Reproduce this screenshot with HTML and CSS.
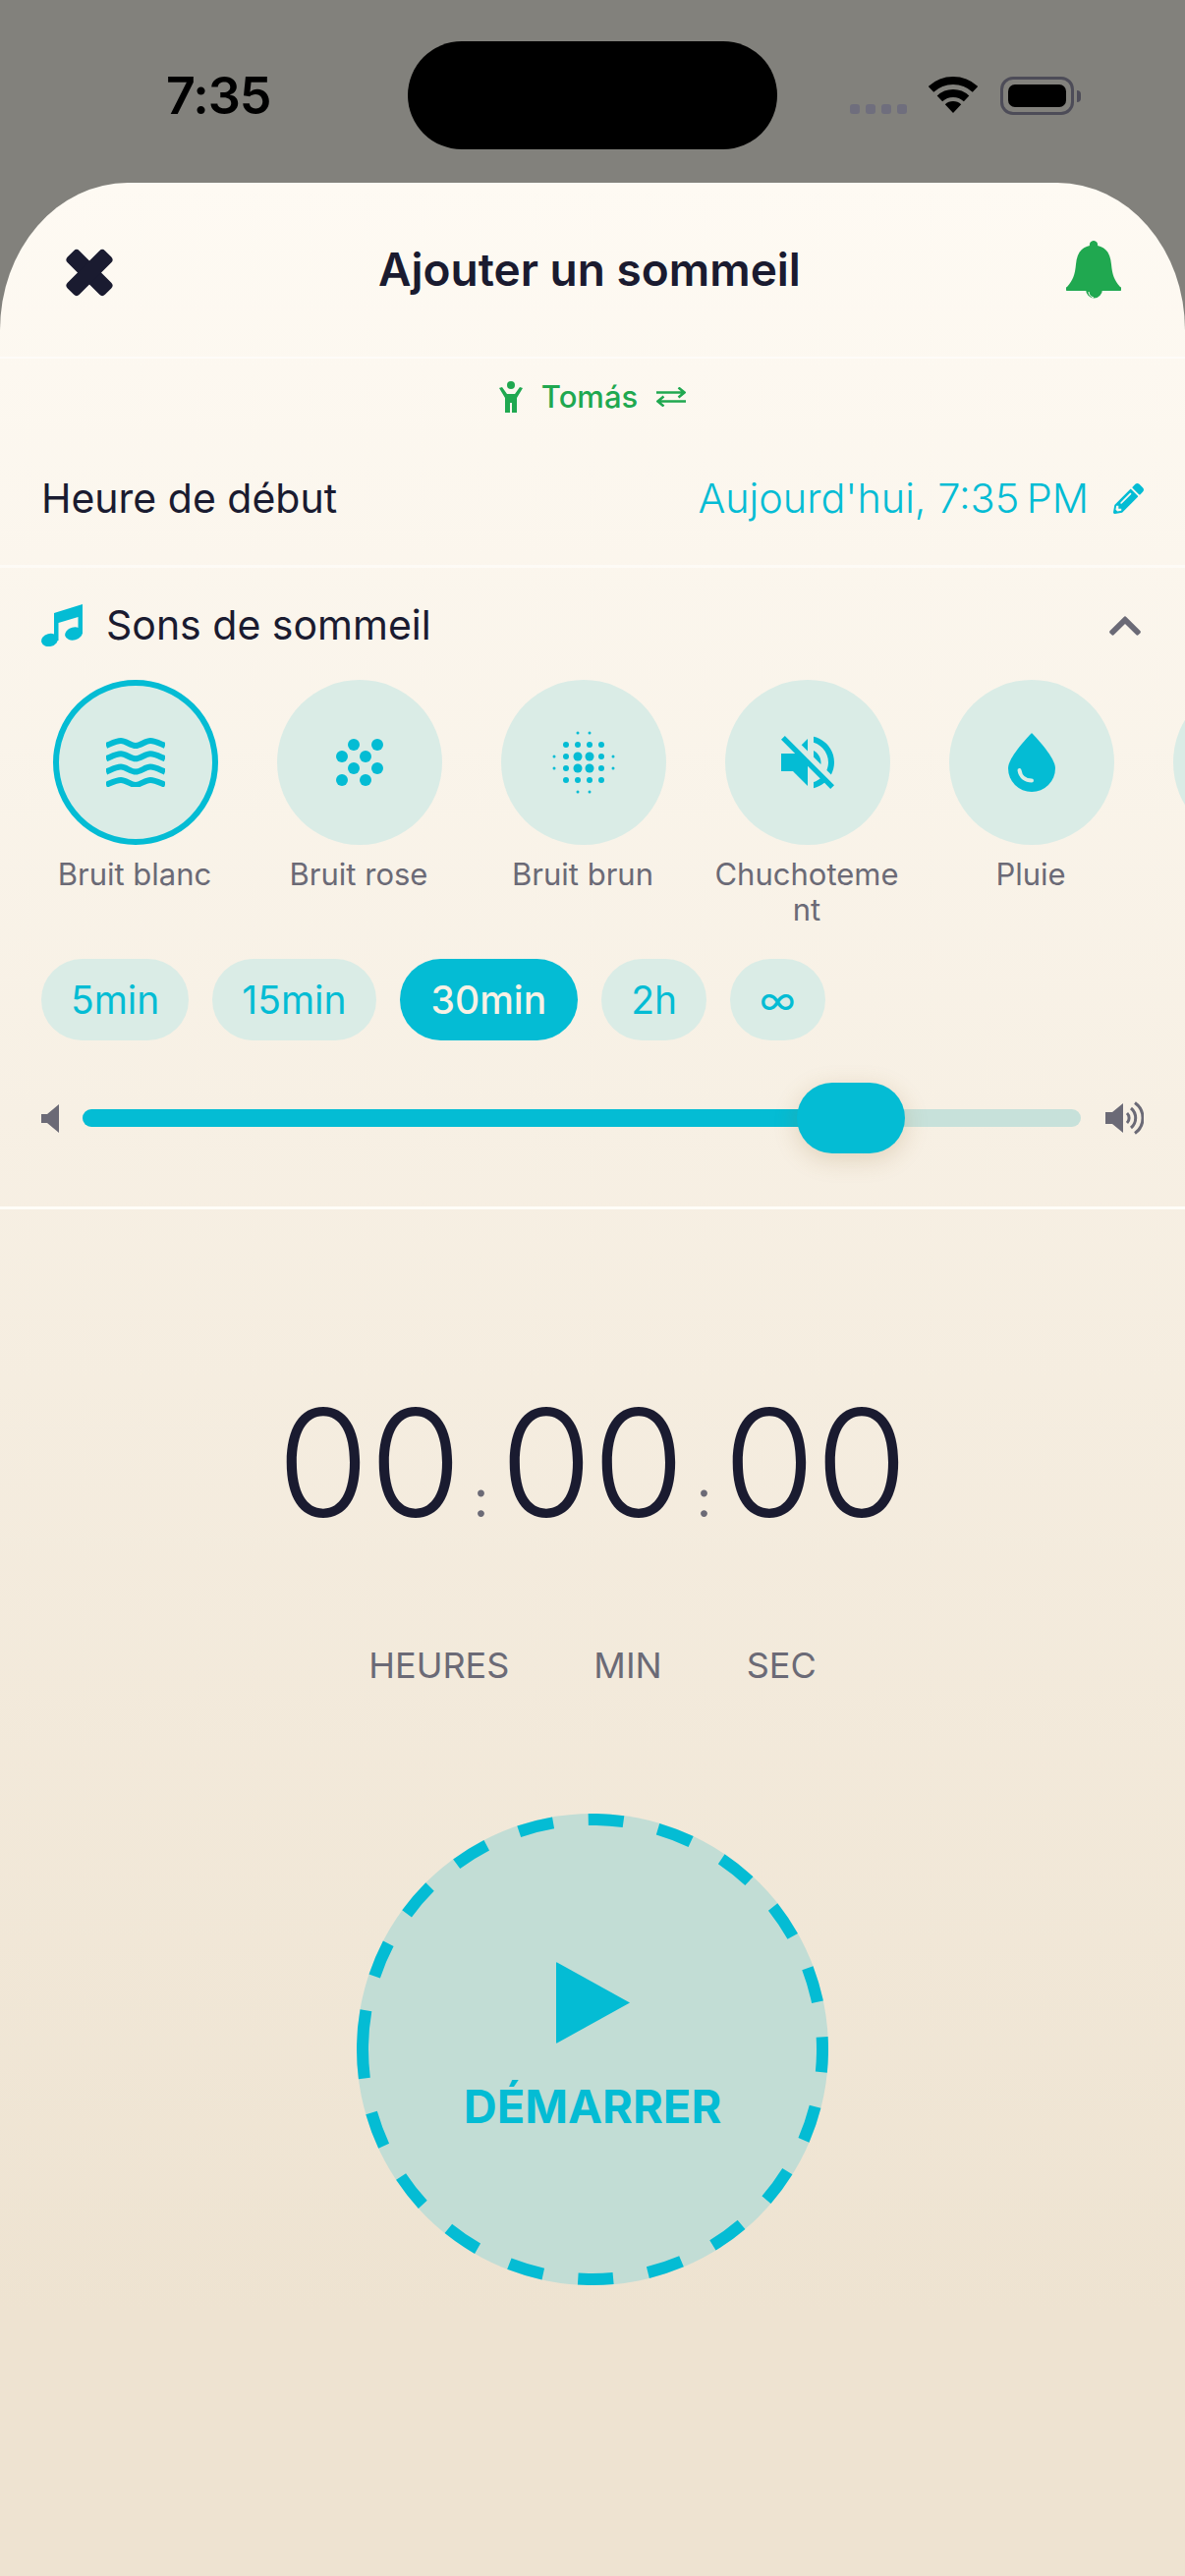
FILE: index.html
```html
<!DOCTYPE html>
<html lang="fr">
<head>
<meta charset="utf-8">
<title>Ajouter un sommeil</title>
<link rel="stylesheet" href="styles.css">
</head>
<body>
<div class="phone">
  <header class="status">
    <span class="clock">7:35</span>
    <div class="island"></div>
    <div class="status-icons">
      <div class="signal"><i></i><i></i><i></i><i></i></div>
      <svg class="wifi" viewBox="0 0 50 38"><g fill="none" stroke="#000" stroke-width="8"><path d="M2.500 12.900A33 33 0 0 1 47.500 12.900"/><path d="M11.400 22.400A20 20 0 0 1 38.600 22.400"/></g><path d="M16.800 28.200A12 12 0 0 1 33.200 28.200L25 37Z"/></svg>
      <div class="battery"><div class="battery-fill"></div></div>
      <div class="battery-tip"></div>
    </div>
  </header>
  <main class="sheet">
    <div class="top-bar">
      <svg class="close" viewBox="0 0 48 49"><g fill="#1a1b30"><rect x="-3" y="16" width="54" height="17" rx="4" transform="rotate(45 24 24.500)"/><rect x="-3" y="16" width="54" height="17" rx="4" transform="rotate(-45 24 24.500)"/></g></svg>
      <h1 class="title">Ajouter un sommeil</h1>
      <svg class="bell" viewBox="0 0 56 59"><path fill="#20a850" d="M28 0a4 4 0 0 1 4 5c9 2 13 8 14 19 1 11 3 16 9 23a2 2 0 0 1-1 4H2a2 2 0 0 1-1-4c6-7 8-12 9-23C11 13 15 7 24 5a4 4 0 0 1 4-5Z"/><path fill="#20a850" d="M20 49a8.500 9.500 0 0 0 17 0Z"/><path fill="none" stroke="#fdf9f2" stroke-width="1" d="M23 52c0 3 2 5 5 6"/></svg>
    </div>
    <div class="child">
      <svg class="figure" viewBox="0 0 24 32"><circle cx="12" cy="4" r="4"/><path d="M0 7l3-1 5 7h8l5-7 3 1-6 10v15h-5V22h-2v10H6V17Z"/></svg>
      <span class="child-name">Tomás</span>
      <svg class="swap" viewBox="0 0 30 20"><g fill="none" stroke="#20a850" stroke-width="2.500"><path d="M0 5.500H28M22.500 0.500L28.500 5.500L22.500 10.500"/><path d="M30 14.500H2M7.500 9.500L1.500 14.500L7.500 19.500"/></g></svg>
    </div>
    <div class="time-row">
      <span class="time-label">Heure de début</span>
      <div class="time-value">
        <span class="time-text">Aujourd'hui, 7:35&#8201;PM</span>
        <svg class="pencil" viewBox="0 0 512 512"><path d="M497.900 142.100l-46.100 46.100c-4.700 4.700-12.300 4.700-17 0l-111-111c-4.700-4.700-4.700-12.300 0-17l46.100-46.100c18.700-18.700 49.100-18.700 67.900 0l60.100 60.100c18.800 18.700 18.800 49.100 0 67.900zM284.200 99.800L21.600 362.400.4 483.900c-2.900 16.400 11.400 30.600 27.800 27.800l121.500-21.300 262.600-262.600c4.700-4.700 4.700-12.300 0-17l-111-111c-4.800-4.700-12.400-4.700-17.100 0zM124.100 339.900c-5.500-5.500-5.500-14.300 0-19.800l154-154c5.500-5.500 14.300-5.500 19.800 0s5.500 14.300 0 19.800l-154 154c-5.500 5.500-14.300 5.500-19.800 0zM88 424h48v36.300l-64.500 11.300-31.100-31.100L51.700 376H88v48z"/></svg>
      </div>
    </div>
    <section class="sounds">
      <div class="sounds-head">
        <svg class="music" viewBox="0 0 42 43"><ellipse cx="8.500" cy="36.500" rx="8.500" ry="6.500" transform="rotate(-15 8.500 36.500)"/><ellipse cx="33" cy="30" rx="9" ry="6.500" transform="rotate(-15 33 30)"/><path d="M13 9L42 0V30H37.500V13L17.500 19V37H13Z"/></svg>
        <span class="sounds-title">Sons de sommeil</span>
        <svg class="chevron" viewBox="-10 110 468 292"><path d="M240.971 130.524l194.343 194.343c9.373 9.373 9.373 24.569 0 33.941l-22.667 22.667c-9.357 9.357-24.522 9.375-33.901.04L224 227.495 69.255 381.516c-9.379 9.335-24.544 9.317-33.901-.04l-22.667-22.667c-9.373-9.373-9.373-24.569 0-33.941L207.030 130.525c9.372-9.373 24.568-9.373 33.941-.001z"/></svg>
      </div>
      <div class="sound-list">
        <div class="sound">
          <div class="disc disc-on">
            <svg class="ic-waves" viewBox="0 0 60 50"><g fill="none" stroke="#04bcd4" stroke-width="6"><path d="M0 8C5 6 10 3 15 3S25 8 30 8 40 3 45 3 55 6 60 8"/><path d="M0 21.300C5 19.300 10 16.300 15 16.300S25 21.300 30 21.300 40 16.300 45 16.300 55 19.300 60 21.300"/><path d="M0 34.600C5 32.600 10 29.600 15 29.600S25 34.600 30 34.600 40 29.600 45 29.600 55 32.600 60 34.600"/><path d="M0 47.900C5 45.900 10 42.900 15 42.900S25 47.900 30 47.900 40 42.900 45 42.900 55 45.900 60 47.900"/></g></svg>
          </div>
          <span class="sound-name">Bruit blanc</span>
        </div>
        <div class="sound">
          <div class="disc">
            <svg class="ic-grid" viewBox="-36 -36 72 72"><g fill="#04bcd4"><circle cx="-6" cy="-18" r="6"/><circle cx="18" cy="-18" r="6"/><circle cx="-18" cy="-6" r="6"/><circle cx="6" cy="-6" r="6"/><circle cx="-6" cy="6" r="6"/><circle cx="18" cy="6" r="6"/><circle cx="-18" cy="18" r="6"/><circle cx="6" cy="18" r="6"/></g></svg>
          </div>
          <span class="sound-name">Bruit rose</span>
        </div>
        <div class="sound">
          <div class="disc">
            <svg class="ic-grid" viewBox="-36 -36 72 72"><g fill="#04bcd4"><circle cx="-6" cy="-6" r="4.500"/><circle cx="6" cy="-6" r="4.500"/><circle cx="-6" cy="6" r="4.500"/><circle cx="6" cy="6" r="4.500"/><circle cx="-18" cy="-6" r="3"/><circle cx="18" cy="-6" r="3"/><circle cx="-18" cy="6" r="3"/><circle cx="18" cy="6" r="3"/><circle cx="-6" cy="-18" r="3"/><circle cx="6" cy="-18" r="3"/><circle cx="-6" cy="18" r="3"/><circle cx="6" cy="18" r="3"/><circle cx="-18" cy="-18" r="3"/><circle cx="18" cy="-18" r="3"/><circle cx="-18" cy="18" r="3"/><circle cx="18" cy="18" r="3"/><circle cx="-30" cy="-6" r="1.500"/><circle cx="30" cy="-6" r="1.500"/><circle cx="-30" cy="6" r="1.500"/><circle cx="30" cy="6" r="1.500"/><circle cx="-6" cy="-30" r="1.500"/><circle cx="6" cy="-30" r="1.500"/><circle cx="-6" cy="30" r="1.500"/><circle cx="6" cy="30" r="1.500"/></g></svg>
          </div>
          <span class="sound-name">Bruit brun</span>
        </div>
        <div class="sound">
          <div class="disc">
            <svg class="ic-mute" viewBox="0 0 24 24"><path fill="#04bcd4" d="M16.500 12c0-1.770-1.020-3.290-2.500-4.030v2.210l2.450 2.450c.03-.2.05-.41.05-.63zm2.500 0c0 .94-.2 1.820-.54 2.640l1.510 1.510C20.630 14.910 21 13.500 21 12c0-4.280-2.990-7.860-7-8.770v2.060c2.890.86 5 3.540 5 6.710zM4.270 3L3 4.270 7.730 9H3v6h4l5 5v-6.730l4.250 4.250c-.67.52-1.420.93-2.250 1.180v2.060c1.380-.31 2.630-.95 3.690-1.810L19.730 21 21 19.730l-9-9L4.270 3zM12 4L9.910 6.090 12 8.180V4z"/></svg>
          </div>
          <span class="sound-name">Chuchotement</span>
        </div>
        <div class="sound">
          <div class="disc">
            <svg class="ic-drop" viewBox="0 0 48 60"><path fill="#04bcd4" d="M24 0C24 0 0 24 0 36A24 24 0 0 0 48 36C48 24 24 0 24 0Z"/><path fill="none" stroke="#dbece5" stroke-width="4" stroke-linecap="round" d="M11.500 38C12.500 45 18 48.500 24 48.500"/></svg>
          </div>
          <span class="sound-name">Pluie</span>
        </div>
        <div class="sound">
          <div class="disc"></div>
        </div>
      </div>
      <div class="chips">
        <span class="chip">5min</span>
        <span class="chip">15min</span>
        <span class="chip chip-on">30min</span>
        <span class="chip">2h</span>
        <span class="chip">∞</span>
      </div>
      <div class="volume">
        <svg class="vol-low" viewBox="0 0 18 29"><path d="M0 10H6L18 0V29L6 19H0Z"/></svg>
        <div class="track">
          <div class="track-fill"></div>
          <div class="thumb"></div>
        </div>
        <svg class="vol-high" viewBox="0 0 39 34"><path fill="#6b6a76" d="M0 11H7L18 2V32L7 23H0Z"/><g fill="none" stroke="#6b6a76" stroke-width="3"><path d="M22 12A7 7 0 0 1 22 22"/><path d="M26 7A13 13 0 0 1 26 27"/><path d="M30 1.500A19 19 0 0 1 30 32.500"/></g></svg>
      </div>
    </section>
    <section class="timer">
      <div class="digits">
        <span class="digit">00</span>
        <span class="colon">:</span>
        <span class="digit">00</span>
        <span class="colon">:</span>
        <span class="digit">00</span>
      </div>
      <div class="units">
        <span class="unit">HEURES</span>
        <span class="unit">MIN</span>
        <span class="unit">SEC</span>
      </div>
      <button class="start" type="button">
        <svg class="start-ring" viewBox="0 0 480 480"><circle cx="240" cy="240" r="234" fill="none" stroke="#04bcd4" stroke-width="12" stroke-dasharray="36 35.800" transform="rotate(181 240 240)"/></svg>
        <svg class="play" viewBox="0 0 75 83"><path d="M1 0.500L75 41.500L1 82.500Q0 83 0 82V1Q0 0 1 0.500Z"/></svg>
        <span class="start-label">DÉMARRER</span>
      </button>
    </section>
  </main>
</div>
</body>
</html>
```
FILE: styles.css
```css
* { box-sizing: border-box; }
html, body { margin: 0; padding: 0; }
body { width: 1206px; height: 2622px; overflow: hidden; font-family: Inter, "Liberation Sans", sans-serif; color: #1a1b30; }
svg { display: block; flex: none; }
.phone { width: 1206px; height: 2622px; background: #82817c; display: flex; flex-direction: column; }

.status { height: 186px; flex: none; display: flex; align-items: flex-start; padding-left: 169px; }
.clock { width: 246px; margin-top: 70px; font-size: 52px; line-height: 56px; font-weight: 600; color: #000; letter-spacing: -1px; }
.island { width: 376px; height: 110px; margin-top: 42px; border-radius: 55px; background: #000; }
.status-icons { display: flex; align-items: flex-start; margin-top: 78px; margin-left: 74px; }
.signal { display: flex; gap: 6px; margin-top: 28px; }
.signal i { width: 10px; height: 10px; border-radius: 3px; background: #6f6e7d; }
.wifi { width: 50px; height: 38px; margin-left: 22px; }
.battery { width: 75px; height: 39px; margin-left: 23px; padding: 5px; border: 3px solid #4d4c58; border-radius: 13px; }
.battery-fill { width: 100%; height: 100%; background: #000; border-radius: 7px; }
.battery-tip { width: 4px; height: 12px; margin: 14px 0 0 3px; background: #4d4c58; border-radius: 0 6px 6px 0; }

.sheet { flex: 1; display: flex; flex-direction: column; border-radius: 130px 130px 0 0 / 150px 150px 0 0; background: linear-gradient(180deg, #fefaf3 0%, #eee3d1 89%); overflow: hidden; }
.top-bar { height: 177px; flex: none; display: flex; align-items: center; justify-content: space-between; padding: 0 65px 0 67px; }
.close { width: 48px; height: 49px; margin-top: 6px; }
.title { margin: 0 0 2px; font-size: 46px; line-height: 56px; font-weight: 600; color: #1a1b30; }
.bell { width: 56px; height: 59px; }

.child { height: 80px; flex: none; display: flex; align-items: center; justify-content: center; border-top: 2px solid rgba(255,255,255,.5); }
.figure { width: 24px; height: 32px; fill: #20a850; }
.child-name { margin: 0 19px; font-size: 31px; line-height: 38px; font-weight: 500; color: #20a850; }
.swap { width: 30px; height: 20px; }

.time-row { height: 135px; flex: none; display: flex; align-items: center; justify-content: space-between; padding: 0 42px 4px; border-bottom: 3px solid rgba(255,255,255,.5); }
.time-label { font-size: 41px; line-height: 48px; }
.time-value { display: flex; align-items: center; gap: 25px; }
.time-text { font-size: 41.4px; line-height: 48px; font-weight: 300; color: #04bcd4; }
.pencil { width: 31px; height: 31px; fill: #04bcd4; }

.sounds { flex: none; border-bottom: 3px solid #fffdf8; padding-bottom: 54px; }
.sounds-head { display: flex; align-items: center; height: 36px; margin: 40px 44px 38px 42px; }
.music { width: 42px; height: 43px; fill: #04bcd4; }
.sounds-title { margin-left: 24px; flex: 1; font-size: 41px; line-height: 48px; }
.chevron { width: 34px; height: 22px; margin-top: 2px; fill: #6b6a76; }
.sound-list { display: flex; gap: 32px; padding-left: 39px; width: 1206px; overflow: hidden; }
.sound { width: 196px; flex: none; display: flex; flex-direction: column; align-items: center; }
.disc { width: 168px; height: 168px; flex: none; margin-left: 2px; border-radius: 50%; background: #daece6; display: flex; align-items: center; justify-content: center; }
.disc-on { border: 6px solid #04bcd4; }
.ic-waves { width: 60px; height: 50px; }
.ic-grid { width: 72px; height: 72px; }
.ic-mute { width: 72px; height: 72px; }
.ic-drop { width: 48px; height: 60px; }
.sound-name { width: 100%; margin-top: 12px; font-size: 31px; line-height: 36px; color: #6b6a76; text-align: center; overflow-wrap: anywhere; }
.chips { display: flex; gap: 24px; margin: 32px 42px 0; }
.chip { height: 83px; padding: 0 30px; display: flex; align-items: center; border-radius: 42px; background: #daece6; color: #04bcd4; font-size: 39px; line-height: 46px; }
.chip-on { padding: 0 32px; background: #04bcd4; color: #f9f1e5; font-weight: 500; }
.volume { display: flex; align-items: center; height: 72px; margin: 43px 42px 0; }
.vol-low { width: 18px; height: 29px; fill: #6b6a76; }
.track { position: relative; width: 1016px; height: 18px; margin-left: 24px; background: #c7e1da; border-radius: 9px; }
.track-fill { width: 780px; height: 18px; background: #04bcd4; border-radius: 9px; }
.thumb { position: absolute; left: 727px; top: -27px; width: 110px; height: 72px; border-radius: 36px; background: #04bcd4; box-shadow: 0 6px 24px rgba(150,110,50,.22); }
.vol-high { width: 39px; height: 34px; margin-left: 25px; }

.timer { flex: 1; display: flex; flex-direction: column; align-items: center; }
.digits { display: flex; align-items: baseline; margin-top: 178px; }
.digit { width: 188px; font-size: 152px; line-height: 160px; font-weight: 300; color: #1a1b30; text-align: center; }
.colon { width: 39px; font-size: 52px; line-height: 52px; color: #6b6a76; text-align: center; }
.units { display: flex; gap: 86px; margin-top: 104px; }
.unit { font-size: 36px; line-height: 44px; color: #6b6a76; }
.start { position: relative; width: 480px; height: 480px; margin-top: 129px; padding: 0 0 3px; border: 0; border-radius: 50%; background: #c2ddd5; display: flex; flex-direction: column; align-items: center; justify-content: center; font-family: inherit; }
.start-ring { position: absolute; left: 0; top: 0; width: 480px; height: 480px; }
.play { width: 75px; height: 83px; fill: #04bcd4; margin-bottom: 36px; }
.start-label { font-size: 47px; line-height: 56px; font-weight: 700; color: #04bcd4; }
```
